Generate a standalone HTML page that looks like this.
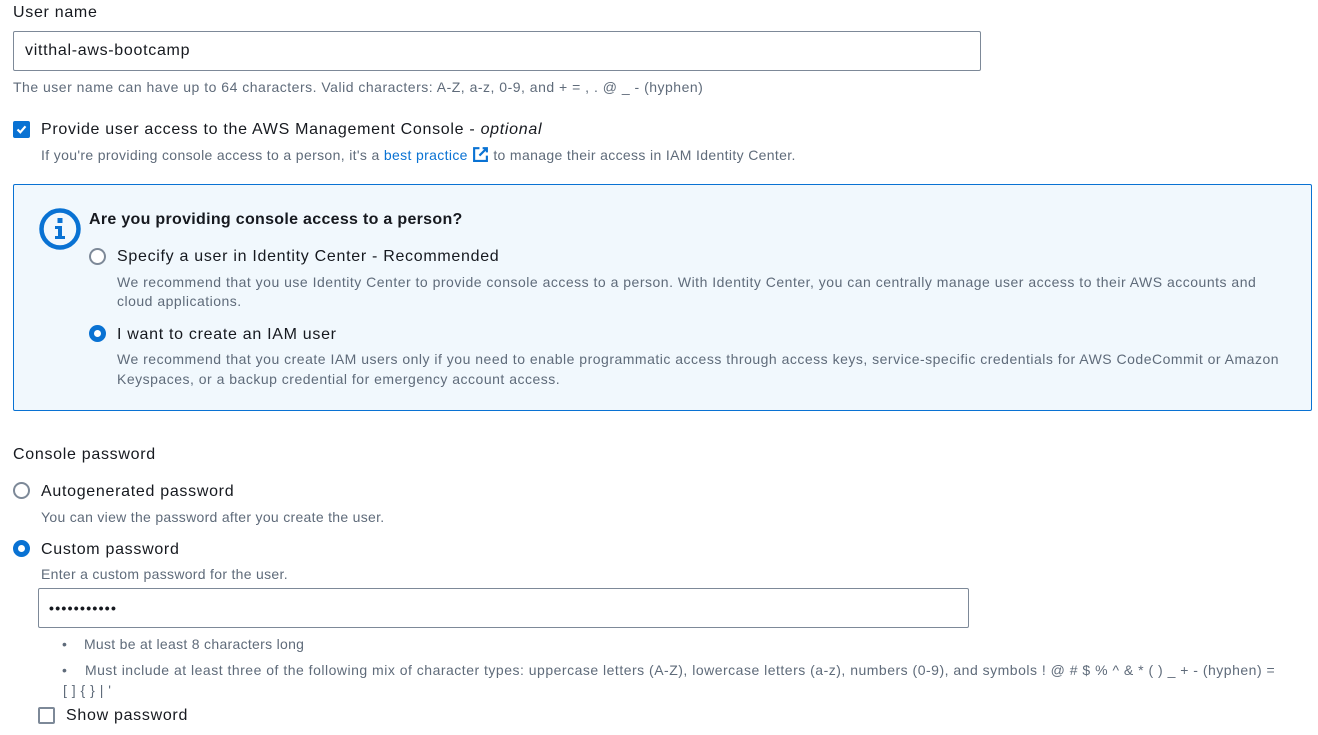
<!DOCTYPE html>
<html><head><style>
*{margin:0;padding:0;box-sizing:border-box}
body{width:1318px;height:735px;background:#fff;font-family:"Liberation Sans",Arial,sans-serif;color:#16191f;position:relative;overflow:hidden}
.t{position:absolute;white-space:nowrap;line-height:20px}
.m{font-size:16px;letter-spacing:0.7px}
.s{font-size:14px;color:#5f6b7a;letter-spacing:0.5px}
.inp{position:absolute;border:1px solid #7d8998;border-radius:2px;background:#fff}
.rad{position:absolute;width:17px;height:17px;border-radius:50%;border:2px solid #7d8998;background:#fff}
.rad.on{border:5px solid #0972d3}
.cb{position:absolute;width:17px;height:17px;border-radius:2px;border:2px solid #7d8998;background:#fff}
a{color:#0972d3;text-decoration:none}
</style></head><body>
<div class="t m" style="left:13px;top:3px">User name</div>
<div class="inp" style="left:13px;top:31px;width:968px;height:40px"></div>
<div class="t m" style="left:25px;top:41px">vitthal-aws-bootcamp</div>
<div class="t s" style="left:13px;top:77px">The user name can have up to 64 characters. Valid characters: A-Z, a-z, 0-9, and + = , . @ _ - (hyphen)</div>

<div class="cb" style="left:13px;top:121px;background:#0972d3;border-color:#0972d3"><svg width="13" height="13" viewBox="0 0 13 13" style="position:absolute;left:0;top:0"><path d="M2.5 6.5 L5.3 9.3 L10.5 3.3" stroke="#fff" stroke-width="2.2" fill="none"/></svg></div>
<div class="t m" style="left:41px;top:120px">Provide user access to the AWS Management Console - <i>optional</i></div>
<div class="t s" style="left:41px;top:145px;letter-spacing:0.35px">If you're providing console access to a person, it's a <a>best practice</a> <svg width="17" height="17" viewBox="0 0 16 16" style="vertical-align:-3px"><path d="M7 2H2v12h12V9" stroke="#0972d3" stroke-width="2" fill="none"/><path d="M10 2h4v4M14 2L7 9" stroke="#0972d3" stroke-width="2" fill="none"/></svg> to manage their access in IAM Identity Center.</div>

<div style="position:absolute;left:13px;top:184px;width:1299px;height:227px;background:#f1f8fd;border:1px solid #0972d3;border-radius:2px"></div>
<svg style="position:absolute;left:38px;top:207px" width="44" height="44" viewBox="0 0 44 44"><circle cx="22" cy="22" r="18.5" stroke="#0972d3" stroke-width="4.5" fill="none"/><rect x="19.5" y="11" width="5" height="5" fill="#0972d3"/><path d="M17 19h7v10h3v3H17v-3h3v-7h-3z" fill="#0972d3"/></svg>
<div class="t m" style="left:89px;top:210px;font-weight:bold;letter-spacing:0.3px">Are you providing console access to a person?</div>
<div class="rad" style="left:89px;top:248px"></div>
<div class="t m" style="left:117px;top:247px">Specify a user in Identity Center - Recommended</div>
<div class="t s" style="left:117px;top:272px">We recommend that you use Identity Center to provide console access to a person. With Identity Center, you can centrally manage user access to their AWS accounts and</div>
<div class="t s" style="left:117px;top:291px">cloud applications.</div>
<div class="rad on" style="left:89px;top:325px"></div>
<div class="t m" style="left:117px;top:325px">I want to create an IAM user</div>
<div class="t s" style="left:117px;top:349px">We recommend that you create IAM users only if you need to enable programmatic access through access keys, service-specific credentials for AWS CodeCommit or Amazon</div>
<div class="t s" style="left:117px;top:369px">Keyspaces, or a backup credential for emergency account access.</div>

<div class="t m" style="left:13px;top:445px">Console password</div>
<div class="rad" style="left:13px;top:482px"></div>
<div class="t m" style="left:41px;top:482px">Autogenerated password</div>
<div class="t s" style="left:41px;top:507px;letter-spacing:0.3px">You can view the password after you create the user.</div>
<div class="rad on" style="left:13px;top:540px"></div>
<div class="t m" style="left:41px;top:540px">Custom password</div>
<div class="t s" style="left:41px;top:564px;letter-spacing:0.3px">Enter a custom password for the user.</div>
<div class="inp" style="left:38px;top:588px;width:931px;height:40px"></div>
<div class="t" style="left:49px;top:598px;font-weight:bold;font-size:14px;letter-spacing:1.3px">•••••••••••</div>
<div class="t s" style="left:62px;top:634px;letter-spacing:0.3px">•&nbsp;&nbsp;&nbsp; Must be at least 8 characters long</div>
<div class="t s" style="left:62px;top:660px">•&nbsp;&nbsp;&nbsp; Must include at least three of the following mix of character types: uppercase letters (A-Z), lowercase letters (a-z), numbers (0-9), and symbols ! @ # $ % ^ &amp; * ( ) _ + - (hyphen) =</div>
<div class="t s" style="left:63px;top:680px">[ ] { } | '</div>
<div class="cb" style="left:38px;top:707px"></div>
<div class="t m" style="left:66px;top:706px">Show password</div>
</body></html>
